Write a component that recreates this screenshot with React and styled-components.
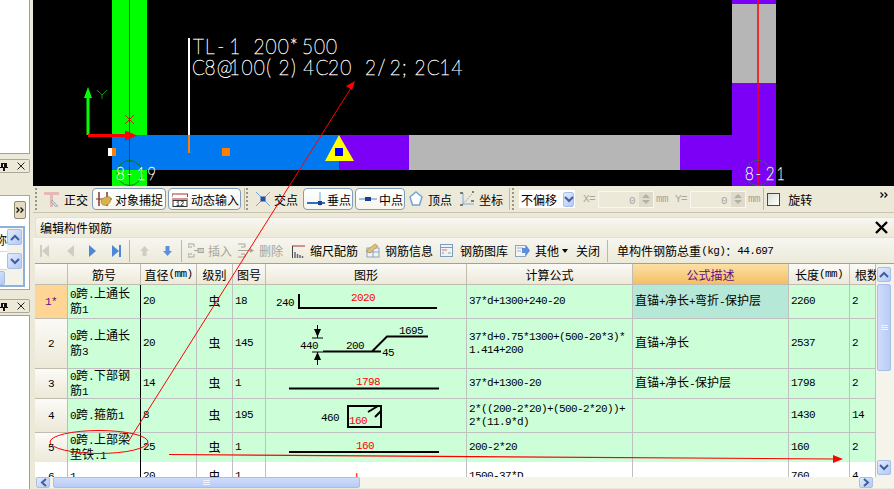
import React from 'react'
import styled, { createGlobalStyle } from 'styled-components'

const GlobalStyle = createGlobalStyle`
  html, body { margin: 0; padding: 0; background: #ece9d8; }
  * { box-sizing: border-box; }
`

const Latin = styled.span`
  font-family: "Liberation Mono", monospace;
  font-size: 11px;
  letter-spacing: -0.6px;
`

// latin runs get the half-width font, everything else stays CJK
const Txt = ({ children }) =>
  String(children)
    .split(/([\x00-\x7f]+)/)
    .map((part, i) => (/^[\x00-\x7f]+$/.test(part) ? <Latin key={i}>{part}</Latin> : part))

const Page = styled.div`
  position: relative;
  display: flex;
  width: 894px;
  height: 489px;
  overflow: hidden;
  background: #ece9d8;
  color: #000;
  font-family: "Noto Sans CJK SC", "Liberation Sans", sans-serif;
  font-size: 12px;
`

/* left dock */
const Dock = styled.div`
  display: flex;
  flex-direction: column;
  width: 33px;
  flex: none;
  padding-right: 3px;
`
const DockPanel = styled.div`
  height: ${p => p.$h}px;
  margin-top: ${p => p.$mt || 0}px;
  background: #fff;
  border: 1px solid #8ea4bb;
  border-left: 0;
  ${p => p.$open && 'border-bottom: 0;'}
  ${p => p.$top && 'border-top: 0;'}
`
const DockTab = styled.div`
  display: flex;
  align-items: center;
  justify-content: space-between;
  height: 14px;
  margin-top: ${p => p.$mt}px;
  padding: 0 4px 0 0;
  background: #ece9d8;
  border: 1px solid #aca899;
  border-left: 0;
  border-radius: 0 2px 2px 0;
`
const DockForm = styled.div`
  position: relative;
  height: 95px;
  margin-top: ${p => p.$mt}px;
  background: #fff;
  border: 1px solid #aca899;
  border-left: 0;
`
const OverflowBtn = styled.div`
  position: absolute;
  top: 5px;
  right: 3px;
  width: 12px;
  height: 18px;
  display: flex;
  align-items: center;
  justify-content: center;
  background: #e3dcc0;
  border: 1px solid #8f8a70;
  border-radius: 2px;
`
const DockList = styled.div`
  position: absolute;
  left: 0;
  right: 4px;
  top: 30px;
  bottom: 2px;
  background: #f4f3ea;
  border: 2px solid #8fb0d8;
  border-left: 0;
`
const DockListRow = styled.div`
  width: 7px;
  height: ${p => p.$h}px;
  overflow: hidden;
  background: #fff;
  direction: rtl;
  line-height: ${p => p.$h}px;
  border-bottom: 1px solid #d8d8d0;
`
const DockListScroll = styled.div`
  position: absolute;
  left: ${p => p.$left ?? 7}px;
  width: 15px;
  top: ${p => p.$top}px;
  height: 16px;
`

/* scroll buttons */
const ScrollBtn = styled.div`
  display: flex;
  align-items: center;
  justify-content: center;
  width: ${p => p.$w || 14}px;
  height: ${p => p.$h || 15}px;
  flex: none;
  background: linear-gradient(135deg, #e3ebfd, #b4c8f6);
  border: 1px solid #a9bfe8;
  border-radius: 2px;
`

/* main column */
const Main = styled.div`
  display: flex;
  flex-direction: column;
  flex: 1;
  min-width: 0;
`
const Canvas = styled.svg`
  display: block;
  width: 861px;
  height: 186px;
  flex: none;
  background: #000;
`
const CadText = styled.text`
  font-family: "Lato", "Inter", sans-serif;
  font-size: 19px;
  font-weight: 100;
  fill: #fff;
  stroke: #fff;
  stroke-width: 0.45px;
`
const AxisText = styled(CadText)`
  font-size: 15px;
`

const Bar = styled.div`
  display: flex;
  align-items: center;
  flex: none;
  height: ${p => p.$h}px;
  padding-left: 2px;
`
const SnapBar = styled(Bar)`
  border-bottom: 1px solid #c8c4b0;
`
const Item = styled.div`
  display: flex;
  align-items: center;
  flex: none;
  margin-left: ${p => p.$ml || 0}px;
  color: ${p => (p.$off ? '#a7a69a' : '#000')};
  white-space: nowrap;
`
const Grip = styled.div`
  width: 2px;
  height: 22px;
  flex: none;
  margin-left: ${p => p.$ml || 0}px;
  background: repeating-linear-gradient(#9a9684 0 2px, transparent 2px 4px);
`
const Sep = styled.div`
  width: 1px;
  height: ${p => p.$h || 22}px;
  flex: none;
  margin-left: ${p => p.$ml || 0}px;
  background: #bcb8a4;
`
const Toggle = styled.div`
  display: flex;
  align-items: center;
  gap: ${p => p.$gap ?? 3}px;
  width: ${p => p.$w}px;
  height: 22px;
  flex: none;
  margin-left: ${p => p.$ml || 0}px;
  padding-left: 3px;
  background: linear-gradient(#ffffff, #f6f5ee);
  border: 1px solid #7f9db9;
  border-radius: 4px;
  white-space: nowrap;
`
const Combo = styled.div`
  display: flex;
  align-items: center;
  justify-content: space-between;
  width: 56px;
  height: 18px;
  flex: none;
  margin-left: ${p => p.$ml}px;
  padding: 0 1px 0 2px;
  background: #fff;
`
const Field = styled.div`
  display: flex;
  width: 56px;
  height: 17px;
  flex: none;
  margin-left: 3px;
  border: 1px solid #f8f7f0;
  background: #ece9d8;
`
const FieldValue = styled.div`
  flex: 1;
  padding-right: 4px;
  text-align: right;
  color: #a7a69a;
  line-height: 14px;
`
const Spin = styled.div`
  display: flex;
  flex-direction: column;
  align-items: center;
  justify-content: center;
  width: 14px;
  gap: 2px;
  background: #dedbcc;
`
const Check = styled.div`
  width: 13px;
  height: 13px;
  flex: none;
  margin-left: ${p => p.$ml}px;
  background: linear-gradient(135deg, #dcdcd6, #fff);
  border: 1px solid #1c5180;
`
const More = styled.div`
  margin-left: auto;
  margin-right: 6px;
  align-self: flex-start;
  margin-top: 6px;
`

const PanelTitle = styled.div`
  display: flex;
  align-items: center;
  justify-content: space-between;
  flex: none;
  height: 21px;
  margin: 4px 0 0 2px;
  padding: 0 1px 0 4px;
  background: linear-gradient(#f8f7f1, #ece9d8);
  border-radius: 4px 0 0 4px;
  border: 1px solid #e4e1cf;
  border-right: 0;
  font-size: 12px;
`
const CloseX = styled.svg`
  display: block;
  width: 16px;
  height: 16px;
  margin-right: 3px;
`
const ActionBar = styled(Bar)`
  padding-left: 0;
  background: linear-gradient(#f7f6f0, #ecead9);
`

/* table */
const TableWrap = styled.div`
  display: flex;
  flex: none;
  height: 214px;
  margin-left: 2px;
  border-top: 1px solid #8ea4bb;
  background: #fff;
  overflow: hidden;
`
const Table = styled.div`
  width: 841px;
  flex: none;
  overflow: hidden;
`
const Row = styled.div`
  display: grid;
  grid-template-columns: 33px 73px 56px 36px 33px 201px 166px 156px 61px 26px;
  height: ${p => p.$h}px;
`
const Cell = styled.div`
  display: flex;
  align-items: center;
  min-width: 0;
  padding: 0 2px 0 2px;
  background: ${p => (p.$selected ? '#b5e8d6' : p.$plain ? '#fff' : '#ccffd8')};
  border-right: 1px solid ${p => (p.$frozen ? '#000' : '#c0c0c0')};
  border-bottom: 1px solid #c0c0c0;
  color: ${p => (p.$red ? '#f00' : '#000')};
  line-height: 12.5px;
  white-space: pre-line;
  justify-content: ${p => (p.$center ? 'center' : 'flex-start')};
`
const HeadCell = styled.div`
  display: flex;
  align-items: center;
  justify-content: ${p => (p.$clipped ? 'flex-start' : 'center')};
  padding-left: ${p => (p.$clipped ? 5 : 0)}px;
  white-space: nowrap;
  background: ${p =>
    p.$active ? 'linear-gradient(#fce0a6, #f4bf62)' : 'linear-gradient(#fbfaf6, #ece9d8)'};
  border-right: 1px solid #c0bdb0;
  border-bottom: 1px solid #c0bdb0;
  color: ${p => (p.$active ? '#600a8c' : '#000')};
`
const RowHead = styled.div`
  display: flex;
  align-items: center;
  justify-content: center;
  background: ${p =>
    p.$current
      ? '#ffd595'
      : p.$plain
      ? '#fff'
      : 'linear-gradient(#fbfaf6, #ece9d8)'};
  border-right: 1px solid #c0bdb0;
  border-bottom: 1px solid #c0bdb0;
  color: ${p => (p.$current ? '#600a8c' : '#000')};
`
const ShapeCell = styled(Cell)`
  padding: 0;
  align-items: flex-start;
`
const ShapeSvg = styled.svg`
  display: block;
  width: 200px;
  height: 100%;
  flex: none;
`
const DimText = styled.text`
  font-family: "Liberation Mono", monospace;
  font-size: 11px;
  letter-spacing: -0.6px;
  fill: ${p => (p.$red ? '#f00' : '#000')};
  text-anchor: ${p => p.$anchor || 'middle'};
`

const VScroll = styled.div`
  display: flex;
  flex-direction: column;
  width: 18px;
  flex: none;
  padding: 3px 3px 0 1px;
  background: #f5f4ea;
`
const VThumb = styled.div`
  display: flex;
  align-items: center;
  justify-content: center;
  height: 87px;
  margin: 2px 0 89px;
  background: linear-gradient(90deg, #cfdcfb, #b8cbf7);
  border: 1px solid #a9bfe8;
  border-radius: 2px;
`
const HScroll = styled.div`
  display: flex;
  align-items: center;
  flex: none;
  height: 11px;
  margin-left: 3px;
  background: #f5f4ea;
`
const HThumb = styled.div`
  display: flex;
  align-items: center;
  justify-content: center;
  width: 307px;
  height: 11px;
  margin: 0 499px 0 3px;
  background: linear-gradient(#cfdcfb, #b8cbf7);
  border: 1px solid #a9bfe8;
  border-radius: 2px;
`
const Overlay = styled.svg`
  position: absolute;
  left: 0;
  top: 0;
  width: 894px;
  height: 489px;
  pointer-events: none;
`

/* small drawings */
const Ico = ({ w = 16, h = 16, children }) => (
  <svg width={w} height={h} viewBox={`0 0 ${w} ${h}`} style={{ display: 'block', flex: 'none' }}>
    {children}
  </svg>
)
const Chevron = ({ up, color = '#3e5f9e' }) => (
  <Ico w={10} h={7}>
    <path d={up ? 'M1 6 5 2l4 4' : 'M1 1l4 4 4-4'} fill="none" stroke={color} strokeWidth="2" />
  </Ico>
)
const ChevronSide = ({ left }) => (
  <Ico w={7} h={9}>
    <path d={left ? 'M6 1 2 4.500l4 3.500' : 'M1 1l4 3.500-4 3.500'} fill="none" stroke="#3e5f9e" strokeWidth="2" />
  </Ico>
)
const DoubleChevron = () => (
  <Ico w={8} h={6}>
    <path d="M.5.500 3 3 .5 5.500M4.500.500 7 3 4.500 5.500" fill="none" stroke="#111" strokeWidth="1.300" />
  </Ico>
)
const SpinArrow = ({ up }) => (
  <Ico w={8} h={4}>
    <path d={up ? 'M0 4l4-4 4 4z' : 'M0 0l4 4 4-4z'} fill="#b3b1a4" />
  </Ico>
)
const Grab = () => (
  <Ico w={7} h={6}>
    <path d="M0 .500h7M0 2.500h7M0 4.500h7" stroke="#eef3ff" />
  </Ico>
)
const Pin = () => (
  <Ico w={8} h={9}>
    <path d="M1 1h6v4H1zM0 5h8v1H0zM3 6h2v3H3z" fill="#111" />
    <path d="M3 2h1v3H3z" fill="#ece9d8" />
  </Ico>
)
const Cross = () => (
  <Ico w={8} h={8}>
    <path d="M.5.500l7 7m0-7l-7 7" stroke="#222" strokeWidth="1" />
  </Ico>
)
const OrthoIcon = () => (
  <Ico>
    <path d="M0 1h15v3H9v12H6V4H0z" fill="#e4b9b6" />
    <path d="M8 9l6 6-2 1-5-5z" fill="#c9d6e4" stroke="#7c8ba0" strokeWidth=".5" />
  </Ico>
)
const SnapIcon = () => (
  <Ico>
    <path d="M0 8h16" stroke="#a22" strokeWidth="1" />
    <path d="M3 1v14M11 1v14" stroke="#7a3a2a" strokeWidth="1.500" />
    <path d="M5 10c1-3 6-5 9-4 2 2 0 7-3 8-3 1-6 0-6-4z" fill="#d9b44a" stroke="#8b7434" strokeWidth=".6" />
  </Ico>
)
const DynIcon = () => (
  <Ico>
    <path d="M0 3h16M0 8h16" stroke="#a33" strokeWidth="1" />
    <path d="M0 3v3M15.500 3v3" stroke="#555" />
    <rect x="1" y="9.500" width="14" height="6" fill="#fff" stroke="#333" />
    <text x="8" y="15" textAnchor="middle" fontSize="7" fontFamily="Liberation Mono">12</text>
  </Ico>
)
const CrossSnap = () => (
  <Ico>
    <path d="M1 1l14 14M15 1 1 15" stroke="#6fa6dc" strokeWidth="1" />
    <rect x="5.500" y="5.500" width="5" height="5" fill="#2b4d9a" />
  </Ico>
)
const PerpSnap = () => (
  <Ico w={18}>
    <path d="M0 12h18" stroke="#2d6fc0" strokeWidth="2" />
    <path d="M13 1v14" stroke="#6fa6dc" strokeWidth="1" />
    <rect x="11" y="10" width="4" height="4" fill="#1d3f8e" />
  </Ico>
)
const MidSnap = () => (
  <Ico w={18}>
    <path d="M0 8h18" stroke="#7fb0e0" strokeWidth="1.500" />
    <rect x="6" y="6" width="6" height="4" fill="#1d3f8e" />
  </Ico>
)
const VertexSnap = () => (
  <Ico w={14}>
    <path d="M7 1l6 5-2.500 8h-7L1 6z" fill="#fff" stroke="#6fa6dc" strokeWidth="1.500" />
  </Ico>
)
const CoordSnap = () => (
  <Ico>
    <path d="M4 2v11h11" fill="none" stroke="#7fa9d8" strokeWidth="1" />
    <path d="M4 13 13 3" stroke="#7fa9d8" strokeDasharray="2 1" />
    <path d="M1 2h3M13 1h2M1 14h3M12 10h3" stroke="#555" strokeWidth="1.500" />
  </Ico>
)
const NavIcon = ({ dir, end, on }) => {
  const c = on ? '#4f86d8' : '#cfcdc2'
  return (
    <Ico w={9} h={14}>
      {dir === 'left' ? <path d="M9 1v12L2 7z" fill={c} /> : <path d="M0 1v12l7-6z" fill={c} />}
      {end && <path d={dir === 'left' ? 'M0 1h2v12H0z' : 'M7 1h2v12H7z'} fill={c} />}
    </Ico>
  )
}
const ArrowIcon = ({ up, on }) => (
  <Ico w={9} h={10}>
    <path
      d={up ? 'M4.500 0 9 5H6.500v5h-4V5H0z' : 'M2.500 0h4v5H9L4.500 10 0 5h2.500z'}
      fill={on ? '#5f8fdc' : '#cfcdc2'}
    />
  </Ico>
)
const InsertIcon = () => (
  <Ico h={15}>
    <path d="M0 1h6v3M0 14h6v-3M0 1v3h4M0 14v-3h4" fill="none" stroke="#a7a69a" />
    <path d="M6 7.500h4" stroke="#a7a69a" />
    <rect x="10" y="5.500" width="6" height="4" fill="#d5d3c8" stroke="#a7a69a" />
  </Ico>
)
const DeleteIcon = () => (
  <Ico h={15}>
    <path d="M0 1h7v3H3M0 14h7v-3H3M0 7.500h12" fill="none" stroke="#a7a69a" />
    <path d="M12 5l4 2.500-4 2.500z" fill="#a7a69a" />
  </Ico>
)
const ScaleIcon = () => (
  <Ico w={13} h={15}>
    <path d="M0 3h13" stroke="#a33" />
    <path d="M0.500 3v12" stroke="#444" />
    <path d="M3 9v6M5.500 11v4M8 12v3M10.500 13v2" stroke="#667" strokeWidth="1.500" />
  </Ico>
)
const InfoIcon = () => (
  <Ico h={15}>
    <rect x="2" y="5" width="12" height="9" fill="#eef2f8" stroke="#8ea4bb" />
    <path d="M8 5v9M2 9h12" stroke="#8ea4bb" />
    <path d="M1 8 10 1l3 2-8 7z" fill="#e1c27a" stroke="#8b7434" strokeWidth=".5" />
  </Ico>
)
const LibraryIcon = () => (
  <Ico w={13} h={15}>
    <rect x=".5" y="1.500" width="12" height="12" fill="#eef2f8" stroke="#7f9db9" />
    <path d="M.5 4.500h12" stroke="#7f9db9" />
    <path d="M2 7h5M2 10h2" stroke="#c77" />
    <path d="M8 10h3" stroke="#7b7" />
  </Ico>
)
const OtherIcon = () => (
  <Ico w={15} h={15}>
    <rect x=".5" y="2.500" width="10" height="11" fill="#f2f4f8" stroke="#8ea4bb" />
    <path d="M2 5h6M2 8h4" stroke="#a0b0c4" />
    <path d="M7 5h4V2l4 5.500-4 5.500V10H7z" fill="#5d8fd8" />
  </Ico>
)

const LeftDock = () => (
  <Dock>
    <DockPanel $h={154} $top />
    <DockTab $mt={5}>
      <Pin />
      <Cross />
    </DockTab>
    <DockForm $mt={22}>
      <OverflowBtn><DoubleChevron /></OverflowBtn>
      <DockList>
        <DockListRow $h={24}>称</DockListRow>
        <DockListRow $h={18} />
        <DockListScroll $top={1}>
          <ScrollBtn $w={15} $h={16}><Chevron up /></ScrollBtn>
        </DockListScroll>
        <DockListScroll $top={25}>
          <ScrollBtn $w={15} $h={16}><Chevron /></ScrollBtn>
        </DockListScroll>
        <DockListScroll $top={43} $left={-10}>
          <ScrollBtn $w={15} $h={14} />
        </DockListScroll>
      </DockList>
    </DockForm>
    <DockTab $mt={9}>
      <Pin />
      <Cross />
    </DockTab>
    <DockPanel $h={174} $mt={2} $open />
  </Dock>
)

// every glyph on its own cell, the CAD font is fixed pitch
const cells = (x, text, step) => [...text].map((_, i) => (x + i * step).toFixed(1)).join(' ')

const Drawing = () => (
  <Canvas viewBox="33 0 861 186">
    <rect x="112" y="0" width="35" height="135" fill="#00ff00" />
    <rect x="112" y="170" width="35" height="16" fill="#00ff00" />
    <rect x="112" y="135" width="227" height="35" fill="#0078f0" />
    <rect x="339" y="135" width="70" height="35" fill="#7b00f5" />
    <rect x="409" y="135" width="271" height="35" fill="#b6b6b6" />
    <rect x="680" y="135" width="52" height="35" fill="#7b00f5" />
    <rect x="732" y="0" width="44" height="4" fill="#7b00f5" />
    <rect x="732" y="4" width="44" height="79" fill="#b6b6b6" />
    <rect x="732" y="83" width="44" height="103" fill="#7b00f5" />
    <path d="M129.500 0v186" stroke="#d00000" strokeWidth="1" />
    <path d="M758 0v186" stroke="#ff0000" strokeWidth="1.500" />
    <rect x="188" y="38" width="2" height="97" fill="#fff" />
    <rect x="188" y="135" width="2" height="18" fill="#ff8000" />
    <rect x="108" y="148" width="4" height="8" fill="#fff" />
    <rect x="112" y="148" width="4" height="8" fill="#ff8000" />
    <rect x="222" y="148" width="8" height="8" fill="#ff8000" />
    <path d="M339 135l15 26h-29z" fill="#ffff00" />
    <rect x="335" y="148" width="8" height="8" fill="#0000ff" />
    <path d="M88 135V94" stroke="#00ff00" strokeWidth="3" />
    <path d="M88 87l4 11h-8z" fill="#00ff00" />
    <path d="M97 90l5 5 5-5M102 95v4" fill="none" stroke="#00c000" strokeWidth=".8" />
    <path d="M88 135.500h44" stroke="#ff0000" strokeWidth="3" />
    <path d="M137 135.500l-12-5v10z" fill="#ff0000" />
    <path d="M125 115l9 9m0-9l-9 9" stroke="#d00000" strokeWidth=".8" />
    <circle cx="129.500" cy="173" r="12.500" fill="none" stroke="#008000" />
    <circle cx="758" cy="173" r="12.500" fill="none" stroke="#00a000" strokeDasharray="2 1" />
    <g transform="translate(0 53.500) scale(1 1.180)">
      <CadText x={cells(193, 'TL-1 200*500', 12.1)} y="0">TL-1 200*500</CadText>
    </g>
    <g transform="translate(0 74.500) scale(1 1.180)">
      <CadText x={cells(192, 'C8@100(2)4C20 2/2;2C14', 12.36)} y="0">C8@100(2)4C20 2/2;2C14</CadText>
    </g>
    <g transform="translate(0 179.500) scale(1 1.150)">
      <AxisText x={cells(116, '8-19', 10.4)} y="0">8-19</AxisText>
      <AxisText x={cells(745, '8-21', 10.4)} y="0">8-21</AxisText>
    </g>
  </Canvas>
)

const SnapTools = () => (
  <SnapBar $h={27}>
    <Grip />
    <Item $ml={7}><OrthoIcon /></Item>
    <Item $ml={4}>正交</Item>
    <Toggle $w={74} $ml={4}><SnapIcon />对象捕捉</Toggle>
    <Toggle $w={73} $ml={2}><DynIcon />动态输入</Toggle>
    <Sep $ml={3} />
    <Grip $ml={1} />
    <Item $ml={7}><CrossSnap /></Item>
    <Item $ml={3}>交点</Item>
    <Toggle $w={50} $ml={5} $gap={2}><PerpSnap />垂点</Toggle>
    <Toggle $w={50} $ml={2} $gap={2}><MidSnap />中点</Toggle>
    <Item $ml={4}><VertexSnap /></Item>
    <Item $ml={5}>顶点</Item>
    <Item $ml={7}><CoordSnap /></Item>
    <Item $ml={4}>坐标</Item>
    <Sep $ml={6} />
    <Grip $ml={2} />
    <Combo $ml={5}>
      不偏移
      <ScrollBtn $w={11} $h={15}><Chevron /></ScrollBtn>
    </Combo>
    <Item $ml={8} $off><Latin>X=</Latin></Item>
    <Field>
      <FieldValue><Latin>0</Latin></FieldValue>
      <Spin><SpinArrow up /><SpinArrow /></Spin>
    </Field>
    <Item $ml={2} $off><Latin>mm</Latin></Item>
    <Item $ml={7} $off><Latin>Y=</Latin></Item>
    <Field>
      <FieldValue><Latin>0</Latin></FieldValue>
      <Spin><SpinArrow up /><SpinArrow /></Spin>
    </Field>
    <Item $ml={2} $off><Latin>mm</Latin></Item>
    <Sep $ml={3} />
    <Check $ml={3} />
    <Item $ml={8}>旋转</Item>
    <More><DoubleChevron /></More>
  </SnapBar>
)

const ActionTools = () => (
  <ActionBar $h={25}>
    <Item $ml={7}><NavIcon dir="left" end /></Item>
    <Item $ml={16}><NavIcon dir="left" /></Item>
    <Item $ml={15}><NavIcon dir="right" on /></Item>
    <Item $ml={14}><NavIcon dir="right" end on /></Item>
    <Sep $ml={8} />
    <Item $ml={10}><ArrowIcon up /></Item>
    <Item $ml={14}><ArrowIcon on /></Item>
    <Sep $ml={9} />
    <Item $ml={6}><InsertIcon /></Item>
    <Item $ml={4} $off>插入</Item>
    <Item $ml={6}><DeleteIcon /></Item>
    <Item $ml={5} $off>删除</Item>
    <Item $ml={9}><ScaleIcon /></Item>
    <Item $ml={5}>缩尺配筋</Item>
    <Item $ml={7}><InfoIcon /></Item>
    <Item $ml={4}>钢筋信息</Item>
    <Item $ml={7}><LibraryIcon /></Item>
    <Item $ml={7}>钢筋图库</Item>
    <Item $ml={7}><OtherIcon /></Item>
    <Item $ml={5}>其他</Item>
    <Item $ml={3}>
      <Ico w={6} h={4}><path d="M0 0h6L3 4z" fill="#000" /></Ico>
    </Item>
    <Item $ml={8}>关闭</Item>
    <Sep $ml={7} />
    <Item $ml={9}><Txt>单构件钢筋总重(kg)：44.697</Txt></Item>
  </ActionBar>
)

const headers = ['', '筋号', '直径(mm)', '级别', '图号', '图形', '计算公式', '公式描述', '长度(mm)', '根数']

const Bar2 = ({ d }) => <path d={d} fill="none" stroke="#000" strokeWidth="2" />

const shapes = [
  <>
    <DimText x="10" y="21" $anchor="start">240</DimText>
    <Bar2 d="M33 9v14h138" />
    <DimText x="97" y="16" $red>2020</DimText>
  </>,
  <>
    <DimText x="43" y="30">440</DimText>
    <path d="M51.500 6v13M46 19h11M51.500 33v13M46 33h11" stroke="#000" strokeWidth="1" />
    <path d="M48 10h7l-3.500 8zM48 41h7l-3.500-8z" fill="#000" />
    <Bar2 d="M57 32.500h58M106 32.500l15-15h41" />
    <DimText x="89" y="30">200</DimText>
    <DimText x="116" y="37" $anchor="start">45</DimText>
    <DimText x="145" y="15">1695</DimText>
  </>,
  <>
    <Bar2 d="M23 19.500h150" />
    <DimText x="102" y="16" $red>1798</DimText>
  </>,
  <>
    <DimText x="64" y="22">460</DimText>
    <rect x="82" y="7" width="33" height="21" fill="none" stroke="#000" strokeWidth="2" />
    <path d="M102 13l10-6M109 18l6-6" stroke="#000" strokeWidth="2" />
    <DimText x="83" y="25" $anchor="start" $red>160</DimText>
  </>,
  <>
    <Bar2 d="M23 18.500h150" />
    <DimText x="99" y="15" $red>160</DimText>
  </>,
  <>
    <DimText x="92" y="18" $red>L</DimText>
  </>,
]

const rows = [
  { h: 34, name: '0跨.上通长筋1', dia: '20', shapeNo: '18', formula: '37*d+1300+240-20', note: '直锚+净长+弯折-保护层', len: '2260', count: '2' },
  { h: 50, name: '0跨.上通长筋3', dia: '20', shapeNo: '145', formula: '37*d+0.75*1300+(500-20*3)*\n1.414+200', note: '直锚+净长', len: '2537', count: '2' },
  { h: 30, name: '0跨.下部钢筋1', dia: '14', shapeNo: '1', formula: '37*d+1300-20', note: '直锚+净长-保护层', len: '1798', count: '2' },
  { h: 34, name: '0跨.箍筋1', dia: '8', shapeNo: '195', formula: '2*((200-2*20)+(500-2*20))+\n2*(11.9*d)', note: '', len: '1430', count: '14' },
  { h: 29, name: '0跨.上部梁垫铁.1', dia: '25', shapeNo: '1', formula: '200-2*20', note: '', len: '160', count: '2' },
  { h: 30, name: '1', dia: '20', shapeNo: '1', formula: '1500-37*D', note: '', len: '760', count: '4', plain: true },
]

const RebarTable = () => (
  <TableWrap>
    <Table>
      <Row $h={21}>
        {headers.map((title, i) => (
          <HeadCell key={i} $active={title === '公式描述'} $clipped={title === '根数'}>
            <Txt>{title}</Txt>
          </HeadCell>
        ))}
      </Row>
      {rows.map((r, i) => (
        <Row key={i} $h={r.h}>
          <RowHead $current={i === 0} $plain={r.plain}>
            <Latin>{i === 0 ? '1*' : i + 1}</Latin>
          </RowHead>
          <Cell $plain={r.plain} $frozen><span><Txt>{r.name}</Txt></span></Cell>
          <Cell $plain={r.plain}><Latin>{r.dia}</Latin></Cell>
          <Cell $plain={r.plain} $center>虫</Cell>
          <Cell $plain={r.plain}><Latin>{r.shapeNo}</Latin></Cell>
          <ShapeCell $plain={r.plain}>
            <ShapeSvg viewBox={`0 0 200 ${r.h - 1}`}>{shapes[i]}</ShapeSvg>
          </ShapeCell>
          <Cell $plain={r.plain}><Latin>{r.formula}</Latin></Cell>
          <Cell $plain={r.plain} $selected={i === 0}><span><Txt>{r.note}</Txt></span></Cell>
          <Cell $plain={r.plain}><Latin>{r.len}</Latin></Cell>
          <Cell $plain={r.plain}><Latin>{r.count}</Latin></Cell>
        </Row>
      ))}
    </Table>
    <VScroll>
      <ScrollBtn><Chevron up /></ScrollBtn>
      <VThumb><Grab /></VThumb>
      <ScrollBtn><Chevron /></ScrollBtn>
    </VScroll>
  </TableWrap>
)

const Annotations = () => (
  <Overlay viewBox="0 0 894 489">
    <ellipse cx="99" cy="442" rx="49" ry="11.500" fill="none" stroke="#f00" strokeWidth="1" />
    <path d="M128 442 351 88" stroke="#f00" strokeWidth="1" fill="none" />
    <path d="M355 81l-9 5 6 4z" fill="#f00" />
    <path d="M169 454.500 835 459" stroke="#f00" strokeWidth="1.200" fill="none" />
    <path d="M843 459l-10-4v8z" fill="#f00" />
  </Overlay>
)

export default function App() {
  return (
    <Page>
      <GlobalStyle />
      <LeftDock />
      <Main>
        <Drawing />
        <SnapTools />
        <PanelTitle>
          编辑构件钢筋
          <CloseX viewBox="0 0 16 16">
            <path d="M2 2l11 11m0-11L2 13" stroke="#000" strokeWidth="2.400" />
          </CloseX>
        </PanelTitle>
        <ActionTools />
        <RebarTable />
        <HScroll>
          <ScrollBtn $h={11}><ChevronSide left /></ScrollBtn>
          <HThumb><Grab /></HThumb>
          <ScrollBtn $h={11}><ChevronSide /></ScrollBtn>
        </HScroll>
      </Main>
      <Annotations />
    </Page>
  )
}
